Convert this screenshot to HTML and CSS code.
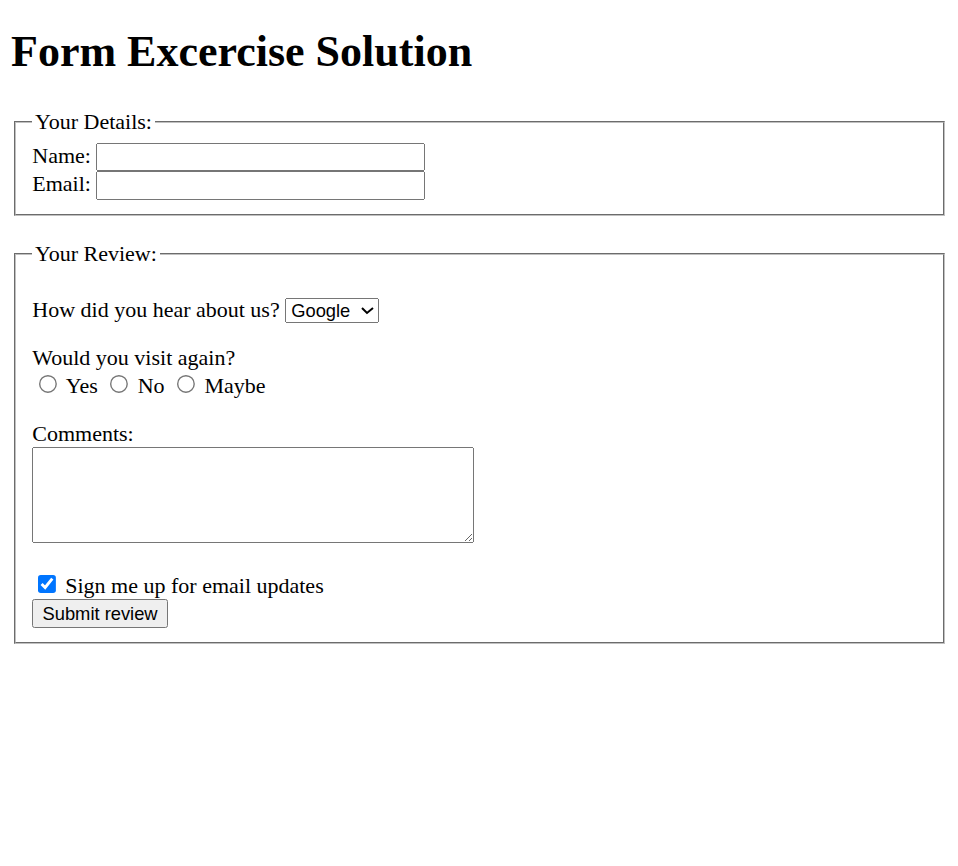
FILE: index.html
```html
<!DOCTYPE html>
<html lang="en">
<head>
<meta charset="utf-8">
<title>Form Excercise Solution</title>
<link rel="stylesheet" href="styles.css">
</head>
<body>
<h1 class="title">Form Excercise Solution</h1>
<form class="review-form">
  <fieldset class="group">
    <legend class="group-legend">Your Details:</legend>
    <label class="field-label" for="name">Name:</label> <input class="text-input" type="text" id="name" name="name"><br>
    <label class="field-label" for="email">Email:</label> <input class="text-input" type="email" id="email" name="email"><br>
  </fieldset>
  <fieldset class="group group-review">
    <legend class="group-legend">Your Review:</legend>
    <p class="row"><label for="hear">How did you hear about us?</label> <select class="select" id="hear" name="hear"><option>Google</option><option>Friend</option><option>Other</option></select></p>
    <p class="row">Would you visit again?<br>
      <input class="radio" type="radio" id="yes" name="visit" value="yes"> <label for="yes">Yes</label>
      <input class="radio" type="radio" id="no" name="visit" value="no"> <label for="no">No</label>
      <input class="radio" type="radio" id="maybe" name="visit" value="maybe"> <label for="maybe">Maybe</label>
    </p>
    <p class="row"><label for="comments">Comments:</label><br><textarea class="comments" id="comments" name="comments"></textarea></p>
    <label class="check-label"><input class="check" type="checkbox" checked> Sign me up for email updates</label><br>
    <button class="submit" type="submit">Submit review</button>
  </fieldset>
</form>
</body>
</html>
```

FILE: styles.css
```css
html {
  zoom: 1.375;
}
body {
  margin: 8px;
  font-family: "Liberation Serif", "Times New Roman", serif;
  font-size: 16px;
  color: #000;
  background: #fff;
}
.title {
  font-size: 2em;
  font-weight: bold;
  margin: 10.8px 0 23.3px;
}
.group {
  margin: 0 1.5px 0 2px;
  border: 2px groove rgb(192, 192, 192);
}
.group-review {
  margin-top: 18.5px;
}
.text-input {
  width: 239px;
  box-sizing: border-box;
  font-family: "Liberation Sans", Arial, sans-serif;
}
.select {
  width: 68.5px;
  font-family: "Liberation Sans", Arial, sans-serif;
}
.submit {
  font-family: "Liberation Sans", Arial, sans-serif;
}
.comments {
  box-sizing: border-box;
  width: 321.5px;
  height: 70px;
  font-family: "Liberation Mono", monospace;
}
```
